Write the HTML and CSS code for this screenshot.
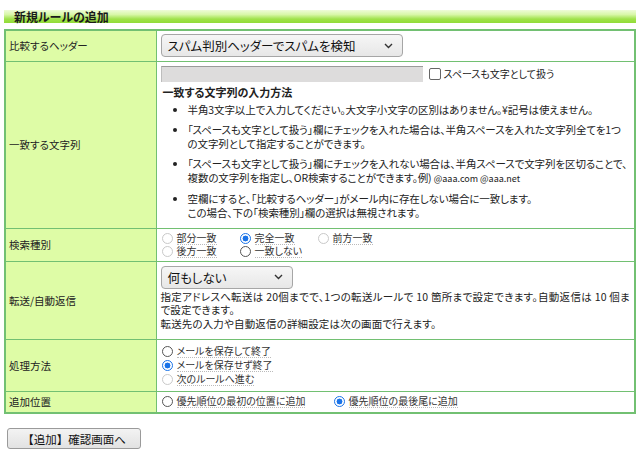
FILE: index.html
```html
<!DOCTYPE html>
<html lang="ja">
<head>
<meta charset="utf-8">
<title>新規ルールの追加</title>
<link rel="stylesheet" href="styles.css">
</head>
<body>
<div class="page">
  <h2 class="title">新規ルールの追加</h2>
  <table class="rule">
    <tr class="r-header">
      <th>比較するヘッダー</th>
      <td>
        <div class="select wide"><span>スパム判別ヘッダーでスパムを検知</span><svg class="chev" width="9" height="6" viewBox="0 0 9 6"><path d="M1 1l3.5 3.5L8 1" fill="none" stroke="#333" stroke-width="1.4"/></svg></div>
      </td>
    </tr>
    <tr class="r-match">
      <th>一致する文字列</th>
      <td>
        <div class="inrow">
          <span class="textbox"></span>
          <label class="chk"><span class="box"></span>スペースも文字として扱う</label>
        </div>
        <h3 class="howto">一致する文字列の入力方法</h3>
        <ul class="notes">
          <li>半角3文字以上で入力してください。大文字小文字の区別はありません。¥記号は使えません。</li>
          <li>「スペースも文字として扱う」欄にチェックを入れた場合は、半角スペースを入れた文字列全てを1つの文字列として指定することができます。</li>
          <li>「スペースも文字として扱う」欄にチェックを入れない場合は、半角スペースで文字列を区切ることで、複数の文字列を指定し、OR検索することができます。例) <span class="ex">@aaa.com @aaa.net</span></li>
          <li>空欄にすると、「比較するヘッダー」がメール内に存在しない場合に一致します。<br>この場合、下の「検索種別」欄の選択は無視されます。</li>
        </ul>
      </td>
    </tr>
    <tr class="r-kind">
      <th>検索種別</th>
      <td>
        <div class="radios grid">
          <label class="rd"><span class="dot light"></span><span class="lt">部分一致</span></label>
          <label class="rd"><span class="dot on"></span><span class="lt">完全一致</span></label>
          <label class="rd"><span class="dot light"></span><span class="lt">前方一致</span></label>
          <label class="rd"><span class="dot light"></span><span class="lt">後方一致</span></label>
          <label class="rd"><span class="dot"></span><span class="lt">一致しない</span></label>
        </div>
      </td>
    </tr>
    <tr class="r-fwd">
      <th>転送/自動返信</th>
      <td>
        <div class="select narrow"><span>何もしない</span><svg class="chev" width="9" height="6" viewBox="0 0 9 6"><path d="M1 1l3.5 3.5L8 1" fill="none" stroke="#333" stroke-width="1.4"/></svg></div>
        <p class="fwdtext">指定アドレスへ転送は 20個までで、1つの転送ルールで 10 箇所まで設定できます。自動返信は 10 個まで設定できます。<br>転送先の入力や自動返信の詳細設定は次の画面で行えます。</p>
      </td>
    </tr>
    <tr class="r-proc">
      <th>処理方法</th>
      <td>
        <div class="radios stack">
          <label class="rd"><span class="dot"></span><span class="lt">メールを保存して終了</span></label>
          <label class="rd"><span class="dot on"></span><span class="lt">メールを保存せず終了</span></label>
          <label class="rd"><span class="dot light"></span><span class="lt">次のルールへ進む</span></label>
        </div>
      </td>
    </tr>
    <tr class="r-pos">
      <th>追加位置</th>
      <td>
        <div class="radios row">
          <label class="rd first"><span class="dot"></span><span class="lt">優先順位の最初の位置に追加</span></label>
          <label class="rd"><span class="dot on"></span><span class="lt">優先順位の最後尾に追加</span></label>
        </div>
      </td>
    </tr>
  </table>
  <button class="submit" type="button">【追加】確認画面へ</button>
</div>
</body>
</html>
```

FILE: styles.css
```css
* { box-sizing: border-box; }
html, body { margin: 0; padding: 0; background: #fff; }
body {
  font-family: "Noto Sans CJK JP", "Noto Sans", sans-serif;
  font-size: 10.5px;
  color: #222;
  font-feature-settings: "palt";
}
.page { padding: 10px 4px 0 4px; }

.title {
  margin: 0;
  height: 13px;
  line-height: 13px;
  padding-left: 10px;
  font-size: 12px;
  font-weight: bold;
  color: #1a1a1a;
  background: linear-gradient(#eefcd8 0%, #d8f7a8 35%, #9fe24a 70%, #92dc38 100%);
}

.rule {
  margin-top: 6px;
  width: 632px;
  border-collapse: collapse;
  border: 2px solid #72c072;
}
.rule th, .rule td {
  border: 1px solid #72c072;
  vertical-align: middle;
}
.rule th {
  width: 151px;
  background: #defca6;
  font-weight: normal;
  text-align: left;
  padding: 0 3px;
  line-height: 13px;
}
.rule td { padding: 3px 4px; line-height: 13px; }

.r-header td { height: 31px; }
.r-match td { padding-top: 4px; padding-bottom: 2px; }
.r-kind td { height: 33px; padding-top: 2px; padding-bottom: 2px; }
.r-fwd td { height: 78px; padding-top: 4px; padding-bottom: 6px; vertical-align: top; }
.r-proc td { height: 52px; }
.r-pos td { height: 22px; padding-top: 1px; padding-bottom: 1px; }

.select {
  display: flex;
  align-items: center;
  justify-content: space-between;
  height: 23px;
  padding: 0 9px 0 6px;
  border: 1px solid #a6a6a6;
  border-radius: 4px;
  background: linear-gradient(#f6f6f6, #e7e7e7);
  font-size: 12.5px;
  color: #111;
}
.select.wide { width: 242px; }
.select.narrow { width: 132px; }
.chev { flex: none; }

.inrow { display: flex; align-items: center; gap: 6px; }
.textbox {
  display: block;
  width: 262px;
  height: 16px;
  background: #dddcdc;
  border-top: 1px solid #9a9a9a;
  border-left: 1px solid #bdbdbd;
}
.chk { display: flex; align-items: center; gap: 3px; font-size: 10px; }
.box {
  display: inline-block;
  width: 12px;
  height: 12px;
  border: 1px solid #666;
  border-radius: 2px;
  background: #fff;
}

.howto {
  margin: 2px 0 0 2px;
  font-size: 11px;
  font-weight: bold;
  line-height: 16px;
}
.notes {
  margin: 3px 0 6px 0;
  padding-left: 27px;
  line-height: 14px;
  letter-spacing: -0.1px;
}
.notes li { margin-bottom: 6px; }
.notes li:last-child { margin-bottom: 0; }
.ex { font-size: 9px; letter-spacing: 0; }

.radios { font-size: 10px; }
.radios .rd { display: flex; align-items: center; gap: 4px; }
.radios.grid { display: grid; grid-template-columns: 78px 78px 78px; }
.radios.stack { display: flex; flex-direction: column; }
.radios.stack .rd { height: 14px; }
.radios.row { display: flex; }
.radios.row .first { width: 172px; }
.lt {
  line-height: 12px;
  border-bottom: 1px dotted #bbb;
  color: #333;
}
.dot {
  flex: none;
  width: 11px;
  height: 11px;
  border-radius: 50%;
  border: 1px solid #555;
  background: #fff;
  margin-left: 1px;
}
.dot.light { border-color: #c9c9c9; }
.dot.on {
  border: 1.5px solid #1a73e8;
  background: radial-gradient(circle, #1a73e8 0 2.7px, #fff 3.2px);
}

.fwdtext {
  margin: 1px 0 0 0;
  text-align: justify;
  line-height: 13.5px;
  letter-spacing: 0.15px;
}

.submit {
  display: block;
  margin: 14px 0 0 3px;
  width: 134px;
  height: 21px;
  padding: 0;
  font-family: "Noto Sans CJK JP", sans-serif;
  font-size: 11.5px;
  color: #111;
  background: linear-gradient(#f3f3f3, #e2e2e2);
  border: 1px solid #9a9a9a;
  border-radius: 3px;
}
```
